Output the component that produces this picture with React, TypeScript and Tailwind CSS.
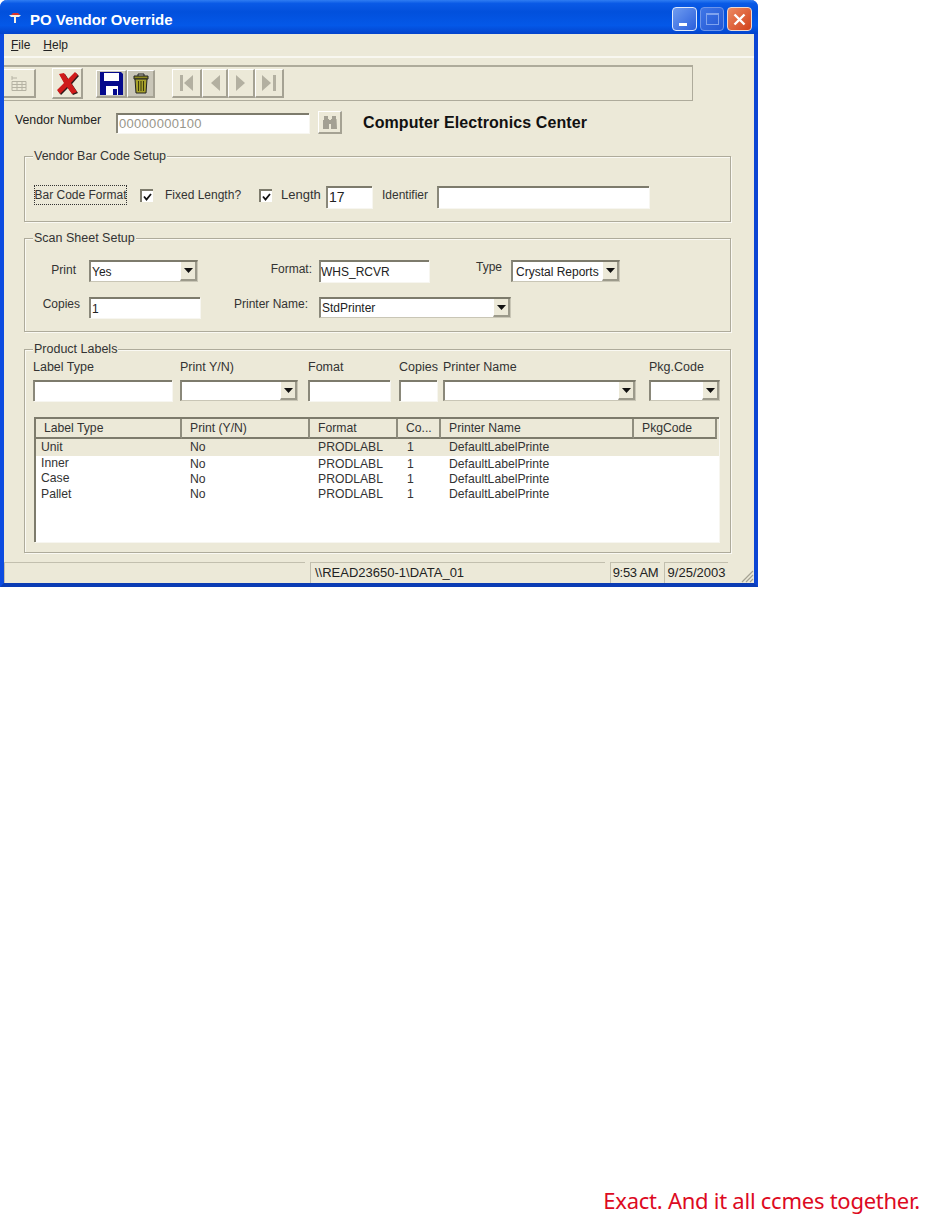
import React from "react";

function Sunken({ className = "", children }: { className?: string; children?: React.ReactNode }) {
  return (
    <div className={`flex items-center bg-white border-t-2 border-l-2 border-t-[#7d7b6c] border-l-[#8a887a] overflow-hidden whitespace-nowrap shadow-[1px_1px_0_#f7f6f0] ${className}`}>
      {children}
    </div>
  );
}

function Arrow() {
  return (
    <svg width="9" height="5" viewBox="0 0 9 5"><path d="M0 0h9L4.5 5z" fill="#111" /></svg>
  );
}

function Combo({ className = "", value, textClass = "pl-[1px]" }: { className?: string; value?: string; textClass?: string }) {
  return (
    <div className={`flex bg-white border-t-2 border-l-2 border-t-[#7d7b6c] border-l-[#8a887a] border-r border-b border-r-[#c9c6b6] border-b-[#c9c6b6] overflow-hidden ${className}`}>
      <div className={`flex-1 flex items-center text-[12px] text-[#222] whitespace-nowrap overflow-hidden ${textClass}`}>{value}</div>
      <div className="w-[17px] flex items-center justify-center bg-[#ece9d8] border-r-2 border-b-2 border-r-[#9c9a8b] border-b-[#9c9a8b] border-l border-l-white">
        <Arrow />
      </div>
    </div>
  );
}

function Check() {
  return (
    <div className="w-[13px] h-[13px] flex items-center justify-center bg-white border-t-2 border-l-2 border-t-[#7d7b6c] border-l-[#7d7b6c] shrink-0">
      <svg width="9" height="8" viewBox="0 0 9 8"><path d="M1 3.5 3.5 6.5 8 1" fill="none" stroke="#111" strokeWidth="1.8" /></svg>
    </div>
  );
}

function Group({ title, className = "", children }: { title: string; className?: string; children: React.ReactNode }) {
  return (
    <div className={`relative ml-[20px] w-[707px] border border-[#aeab9b] shadow-[inset_1px_1px_0_#faf9f3,1px_1px_0_#faf9f3] ${className}`}>
      <span className="absolute -top-[9px] left-[8px] bg-[#ece9d8] px-[1px] text-[12.5px] leading-[16px] text-[#333]">{title}</span>
      {children}
    </div>
  );
}

function ToolBtn({ className = "", children }: { className?: string; children?: React.ReactNode }) {
  return (
    <div className={`flex items-center justify-center border-t border-l border-t-white border-l-white border-r-2 border-b-2 border-r-[#a5a293] border-b-[#a5a293] ${className}`}>
      {children}
    </div>
  );
}

const rows = [
  { h: "h-[17px]", bg: "bg-[#ece9d8]", a: "Unit" },
  { h: "h-[16px]", bg: "", a: "Inner" },
  { h: "h-[14px]", bg: "", a: "Case" },
  { h: "h-[17px]", bg: "", a: "Pallet" },
];

const heads = [
  { w: "w-[146px]", t: "Label Type", p: "pl-[8px]" },
  { w: "w-[128px]", t: "Print (Y/N)", p: "pl-[8px]" },
  { w: "w-[88px]", t: "Format", p: "pl-[8px]" },
  { w: "w-[43px]", t: "Co...", p: "pl-[8px]" },
  { w: "w-[193px]", t: "Printer Name", p: "pl-[8px]" },
  { w: "w-[83px]", t: "PkgCode", p: "pl-[8px]" },
];

export default function App() {
  return (
    <div className="w-[932px] h-[1223px] bg-white flex flex-col font-['Liberation_Sans',Arial,sans-serif] overflow-hidden">
      <div className="w-[758px] h-[587px] flex flex-col bg-[#ece9d8] border-l-4 border-r-4 border-b-4 border-l-[#0c4be0] border-r-[#0c45d4] border-b-[#0b3cb4] rounded-t-[7px]">
        {/* title bar */}
        <div className="-mx-[4px] h-[34px] shrink-0 flex rounded-t-[7px] bg-[linear-gradient(180deg,#2f7df2_0%,#0a5ae6_10%,#0250dc_35%,#0458e8_75%,#0344cc_100%)]">
          <svg className="ml-[8px] mr-[8px] mt-[11px]" width="14" height="14" viewBox="0 0 14 14">
            <path d="M1 4h12l-2 2H8v6H6V6H3z" fill="#f4f0e4" />
            <path d="M5 2h5l2 2H3z" fill="#d8342a" />
          </svg>
          <span className="mt-[11px] text-[15px] leading-[18px] font-bold text-white">PO Vendor Override</span>
          <div className="ml-auto flex gap-[3px] mr-[6px] mt-[7px]">
            <div className="w-[25px] h-[24px] rounded-[4px] border border-[#dfe9fb] bg-[linear-gradient(135deg,#6f9cf0,#2a5fdc)] flex items-end pl-[6px] pb-[4px]">
              <div className="w-[8px] h-[3px] bg-white" />
            </div>
            <div className="w-[24px] h-[24px] rounded-[4px] border border-[#6d95ea] bg-[linear-gradient(135deg,#3f76e6,#2458d4)] flex items-center justify-center">
              <div className="w-[13px] h-[12px] border border-[#7fa3ee] border-t-2" />
            </div>
            <div className="w-[25px] h-[24px] rounded-[4px] border border-[#f0d8cc] bg-[linear-gradient(135deg,#ec8a62,#d2421c)] flex items-center justify-center">
              <svg width="13" height="13" viewBox="0 0 13 13"><path d="M1.5 1.5l10 10M11.5 1.5l-10 10" stroke="#fff" strokeWidth="2.4" /></svg>
            </div>
          </div>
        </div>

        {/* menu */}
        <div className="h-[24px] shrink-0 flex items-center gap-[13px] pl-[7px] border-b-2 border-b-[#f8f7f0] text-[12px] text-[#222]">
          <span><span className="underline">F</span>ile</span>
          <span><span className="underline">H</span>elp</span>
        </div>

        {/* toolbar */}
        <div className="mt-[7px] w-[689px] h-[36px] shrink-0 flex items-center border-t-2 border-r border-b border-t-[#aeab9b] border-r-[#aeab9b] border-b-[#aeab9b]">
          <ToolBtn className="w-[32px] h-[29px] border-l-0">
            <svg width="20" height="20" viewBox="0 0 20 20" fill="none" stroke="#b5b2a3">
              <path d="M3 8.5h14v9H3zM3 11.5h14M3 14.5h14M8 8.5v9M13 8.5v9M3 5h5M3 3v4" />
            </svg>
          </ToolBtn>
          <ToolBtn className="ml-[16px] w-[31px] h-[31px]">
            <svg width="26" height="24" viewBox="0 0 26 24">
              <path d="M5 3l5-1 4 6 7-7 3 3-7 8 6 9-5 2-5-7-7 7-3-4 7-7z" fill="#2a1a1a" transform="translate(1 1)" />
              <path d="M5 3l5-1 4 6 7-7 3 3-7 8 6 9-5 2-5-7-7 7-3-4 7-7z" fill="#cf1b1b" />
            </svg>
          </ToolBtn>
          <ToolBtn className="ml-[13px] w-[31px] h-[28px] bg-[#c9c6b8] border-r-0">
            <svg width="23" height="23" viewBox="0 0 23 23">
              <path d="M0 0h21l2 2v21H0z" fill="#050a8c" />
              <path d="M4 1h15v8H4z" fill="#fff" />
              <path d="M6 14h12v9H6z" fill="#fff" />
              <path d="M13 17h4v6h-4z" fill="#050a8c" />
            </svg>
          </ToolBtn>
          <ToolBtn className="w-[28px] h-[28px] bg-[#c9c6b8]">
            <svg width="16" height="21" viewBox="0 0 16 21">
              <path d="M1 3h14v3H1z" fill="#8f8a20" stroke="#222" />
              <path d="M5 3V1h6v2" fill="none" stroke="#222" />
              <path d="M2 6h12l-1 14H3z" fill="#a7a22c" stroke="#222" />
              <path d="M5.5 8v10M8 8v10M10.5 8v10" stroke="#3a380e" />
            </svg>
          </ToolBtn>
          <ToolBtn className="ml-[17px] w-[30px] h-[29px]">
            <svg width="16" height="18" viewBox="0 0 16 18"><path d="M1 1h3v16H1zM14 1v16L5 9z" fill="#b3b0a1" /></svg>
          </ToolBtn>
          <ToolBtn className="w-[26px] h-[29px]">
            <svg width="12" height="18" viewBox="0 0 12 18"><path d="M11 1v16L2 9z" fill="#b3b0a1" /></svg>
          </ToolBtn>
          <ToolBtn className="w-[27px] h-[29px]">
            <svg width="12" height="18" viewBox="0 0 12 18"><path d="M1 1v16l9-8z" fill="#b3b0a1" /></svg>
          </ToolBtn>
          <ToolBtn className="w-[29px] h-[29px]">
            <svg width="16" height="18" viewBox="0 0 16 18"><path d="M1 1v16l9-8zM12 1h3v16h-3z" fill="#b3b0a1" /></svg>
          </ToolBtn>
        </div>

        {/* vendor row */}
        <div className="mt-[10px] h-[23px] shrink-0 flex items-center">
          <span className="ml-[11px] w-[101px] text-[12.3px] text-[#222] -mt-[4px] whitespace-nowrap">Vendor Number</span>
          <Sunken className="w-[193px] h-[20px] pl-[1px] text-[13px] text-[#98968a] tracking-[0.3px]">00000000100</Sunken>
          <ToolBtn className="ml-[9px] w-[24px] h-[23px]">
            <svg width="16" height="15" viewBox="0 0 16 15" fill="#a3a093">
              <path d="M2 1h4v3h1v10H1V5h1zM10 1h4v3h0.5L15 14H9V4h1zM7 5h2v4H7z" />
            </svg>
          </ToolBtn>
          <span className="ml-[21px] text-[16px] tracking-[0.1px] font-bold text-[#111] whitespace-nowrap">Computer Electronics Center</span>
        </div>

        {/* vendor bar code */}
        <Group title="Vendor Bar Code Setup" className="mt-[22px] h-[66px] shrink-0">
          <div className="mt-[28px] ml-[9px] h-[23px] flex items-center text-[12px] text-[#333]">
            <div className="w-[93px] h-[20px] -mt-[3px] flex items-center justify-center border border-dotted border-[#333] whitespace-nowrap overflow-hidden">Bar Code Format</div>
            <div className="ml-[13px] -mt-[2px]"><Check /></div>
            <span className="ml-[12px] w-[76px] -mt-[3px] whitespace-nowrap">Fixed Length?</span>
            <div className="ml-[18px] -mt-[2px]"><Check /></div>
            <span className="ml-[9px] w-[39px] text-[13px] -mt-[3px]">Length</span>
            <Sunken className="ml-[6px] w-[46px] h-[22px] pl-[1px] text-[14px] text-[#222]">17</Sunken>
            <span className="ml-[10px] w-[47px] -mt-[3px] whitespace-nowrap">Identifier</span>
            <Sunken className="ml-[8px] w-[212px] h-[22px]" />
          </div>
        </Group>

        {/* scan sheet */}
        <Group title="Scan Sheet Setup" className="mt-[16px] h-[94px] shrink-0">
          <div className="mt-[21px] h-[22px] flex text-[12px] text-[#333]">
            <span className="w-[64px] pr-[13px] text-right leading-[20px]">Print</span>
            <Combo className="w-[109px] h-[22px]" value="Yes" />
            <span className="w-[121px] pr-[7px] text-right leading-[18px]">Format:</span>
            <Sunken className="w-[110px] h-[22px] text-[12px] text-[#222]">WHS_RCVR</Sunken>
            <span className="w-[82px] pr-[9px] text-right leading-[15px]">Type</span>
            <Combo className="w-[109px] h-[22px]" value="Crystal Reports" textClass="pl-[3px]" />
          </div>
          <div className="mt-[15px] h-[21px] flex text-[12px] text-[#333]">
            <span className="w-[64px] pr-[9px] text-right leading-[14px]">Copies</span>
            <Sunken className="w-[111px] h-[21px] pl-[1px] text-[12px] text-[#222]">1</Sunken>
            <span className="w-[119px] pr-[11px] text-right leading-[14px]">Printer Name:</span>
            <Combo className="w-[192px] h-[21px]" value="StdPrinter" />
          </div>
        </Group>

        {/* product labels */}
        <Group title="Product Labels" className="mt-[17px] h-[204px] shrink-0">
          <div className="mt-[10px] ml-[8px] flex text-[12.5px] leading-[15px] text-[#333]">
            <div className="w-[139px]">Label Type<Sunken className="mt-[5px] h-[21px]" /></div>
            <div className="ml-[8px] w-[118px]">Print Y/N)<Combo className="mt-[5px] h-[21px]" /></div>
            <div className="ml-[10px] w-[82px]">Fomat<Sunken className="mt-[5px] h-[21px]" /></div>
            <div className="ml-[9px] w-[38px] whitespace-nowrap">Copies<Sunken className="mt-[5px] h-[21px]" /></div>
            <div className="ml-[6px] w-[193px]">Printer Name<Combo className="mt-[5px] h-[21px]" /></div>
            <div className="ml-[13px] w-[71px]">Pkg.Code<Combo className="mt-[5px] h-[21px]" /></div>
          </div>

          <div className="mt-[16px] ml-[9px] w-[685px] h-[125px] bg-white border-t-2 border-l-2 border-t-[#7d7b6c] border-l-[#7d7b6c] text-[12.2px] text-[#333] shadow-[1px_1px_0_#f7f6f0]">
            <div className="flex h-[20px] bg-[#ece9d8]">
              {heads.map((h) => (
                <div key={h.t} className={`${h.w} ${h.p} pt-[1px] flex items-center border-r-2 border-b-2 border-r-[#8f8d7e] border-b-[#7d7b6c] whitespace-nowrap`}>{h.t}</div>
              ))}
            </div>
            {rows.map((r) => (
              <div key={r.a} className={`flex ${r.h} ${r.bg} items-center`}>
                <div className="w-[146px] pl-[5px] -mt-[1px]">{r.a}</div>
                <div className="w-[128px] pl-[8px]">No</div>
                <div className="w-[88px] pl-[8px]">PRODLABL</div>
                <div className="w-[43px] pl-[9px]">1</div>
                <div className="w-[193px] pl-[8px]">DefaultLabelPrinte</div>
              </div>
            ))}
          </div>
        </Group>

        {/* status bar */}
        <div className="mt-[9px] h-[21px] shrink-0 flex text-[13px] text-[#222]">
          <div className="w-[301px] border-t border-l border-t-[#c2bfae] border-l-[#c2bfae]" />
          <div className="ml-[5px] w-[295px] pl-[4px] flex items-center border-t border-l border-t-[#c2bfae] border-l-[#c2bfae]">\\READ23650-1\DATA_01</div>
          <div className="ml-[5px] w-[50px] flex items-center justify-center border-t border-l border-t-[#c2bfae] border-l-[#c2bfae] whitespace-nowrap tracking-[-0.3px]">9:53 AM</div>
          <div className="ml-[4px] w-[64px] flex items-center justify-center border-t border-l border-t-[#c2bfae] border-l-[#c2bfae] whitespace-nowrap">9/25/2003</div>
          <div className="flex-1 flex items-end justify-end">
            <svg width="14" height="14" viewBox="0 0 14 14" stroke="#a5a293" strokeWidth="1.2"><path d="M13 2 2 13M13 6 6 13M13 10l-3 3" /></svg>
          </div>
        </div>
      </div>

      {/* footer */}
      <div className="mt-auto mb-[8px] mr-[12px] text-right text-[22px] leading-[30px] tracking-[-0.25px] text-[#dd0a22] font-['Noto_Sans',sans-serif]">
        Exact. And it all ccmes together.
      </div>
    </div>
  );
}
